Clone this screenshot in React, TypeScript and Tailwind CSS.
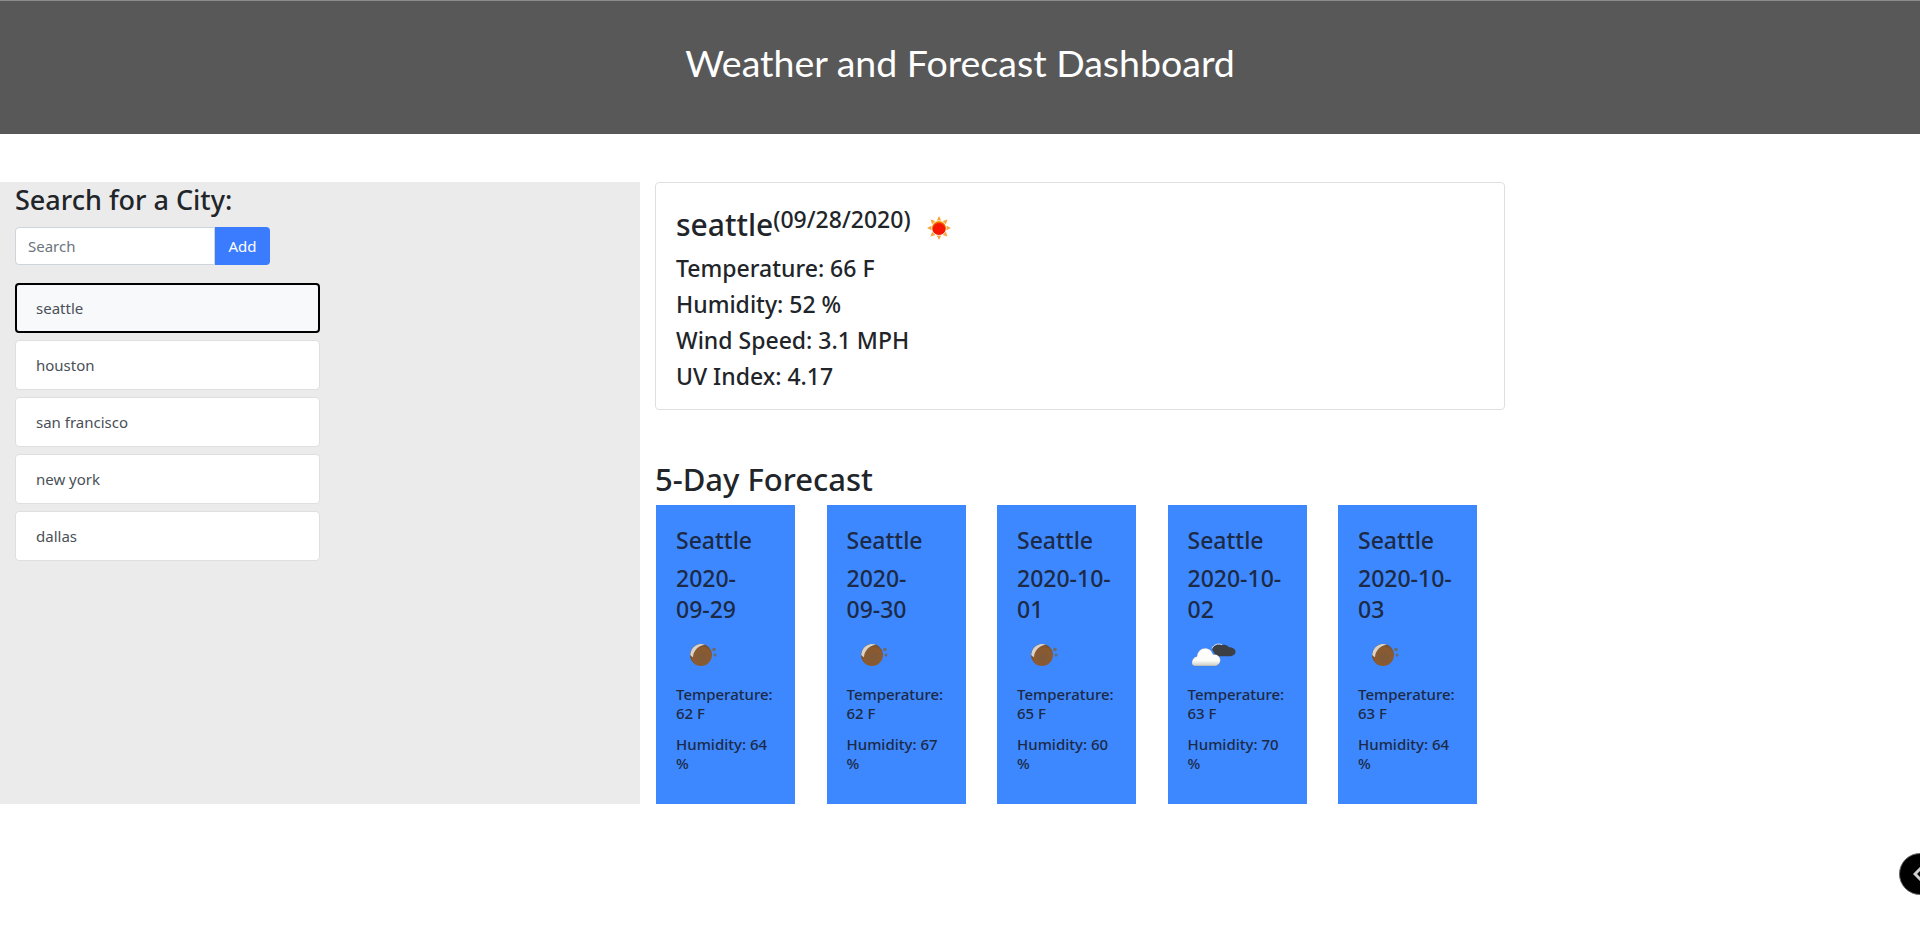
import { useId } from "react";

const cities = ["seattle", "houston", "san francisco", "new york", "dallas"];

type Day = {
	dateTop: string;
	dateBottom: string;
	temp: number;
	humidity: number;
	icon: "night" | "cloud";
};

const forecast: Day[] = [
	{ dateTop: "2020-", dateBottom: "09-29", temp: 62, humidity: 64, icon: "night" },
	{ dateTop: "2020-", dateBottom: "09-30", temp: 62, humidity: 67, icon: "night" },
	{ dateTop: "2020-10-", dateBottom: "01", temp: 65, humidity: 60, icon: "night" },
	{ dateTop: "2020-10-", dateBottom: "02", temp: 63, humidity: 70, icon: "cloud" },
	{ dateTop: "2020-10-", dateBottom: "03", temp: 63, humidity: 64, icon: "night" },
];

function SunIcon() {
	const id = useId();
	return (
		<svg width="26" height="26" viewBox="0 0 26 26" className="ml-[15px] mt-[9px] shrink-0">
			<defs>
				<radialGradient id={id} cx="50%" cy="60%" r="55%">
					<stop offset="0%" stopColor="#ff1200" />
					<stop offset="75%" stopColor="#f01a00" />
					<stop offset="100%" stopColor="#ff9a00" />
				</radialGradient>
			</defs>
			<g fill="#f7a63c">
				<path d="M13 1l2.200 4.500h-4.400z" />
				<path d="M13 25l2.200-4.500h-4.400z" />
				<path d="M1 13l4.500-2.200v4.400z" />
				<path d="M25 13l-4.500-2.200v4.400z" />
				<path d="M4.500 4.500l4.800 1.600-3.200 3.200z" />
				<path d="M21.500 4.500l-4.800 1.600 3.200 3.200z" />
				<path d="M4.500 21.500l4.800-1.600-3.200-3.200z" />
				<path d="M21.500 21.500l-4.800-1.600 3.200-3.200z" />
			</g>
			<circle cx="13" cy="13" r="7" fill={`url(#${id})`} />
		</svg>
	);
}

function NightIcon() {
	const id = useId();
	return (
		<svg width="50" height="50" viewBox="0 0 50 50" className="mt-[1px]">
			<defs>
				<radialGradient id={id} cx="55%" cy="60%" r="60%">
					<stop offset="0%" stopColor="#7d5a3c" />
					<stop offset="70%" stopColor="#8c5a2e" />
					<stop offset="100%" stopColor="#6f4a2a" />
				</radialGradient>
			</defs>
			<circle cx="25" cy="25" r="11" fill={`url(#${id})`} />
			<path d="M14.200 25a11 11 0 0 1 14.800-10.300 13 13 0 0 0-12 12.600 11 11 0 0 1-2.800-2.300z" fill="#d8d4cc" />
			<circle cx="38" cy="19.500" r="1.800" fill="#6b6a6a" />
			<circle cx="39" cy="25" r="1.500" fill="#6b6a6a" />
		</svg>
	);
}

function CloudIcon() {
	const id = useId();
	return (
		<svg width="50" height="50" viewBox="0 0 50 50" className="mt-[2px]">
			<defs>
				<linearGradient id={id} x1="0" y1="0" x2="0" y2="1">
					<stop offset="0%" stopColor="#ffffff" />
					<stop offset="70%" stopColor="#fbfbf8" />
					<stop offset="100%" stopColor="#c9c9c4" />
				</linearGradient>
			</defs>
			<path
				d="M24 19c1.500-4.500 7-6 10.500-4 2.500-.8 5 0 6.500 2.300 3.500 0 6.500 1.700 6.500 4.500s-2.800 4.500-6.500 4.500H28z"
				fill="#3c3f43"
			/>
			<path d="M24 18.500c1.500-4 6.500-5.500 10-3.700" fill="none" stroke="#e8e8e8" strokeWidth="0.9" />
			<path
				d="M4 34c-.5-4 2-7 5-7.500.5-5.500 5-9 10-8 3 .6 5 3 6 6 3.500-.6 6.500 1.200 7.300 4.800.5 3-1.200 5.500-4.300 6.700H8C6 36 4.500 35.500 4 34z"
				fill={`url(#${id})`}
				stroke="#5b5b5b"
				strokeOpacity="0.35"
				strokeWidth="0.6"
			/>
		</svg>
	);
}

function ForecastCard({ day }: { day: Day }) {
	return (
		<div className="w-[139px] h-[299px] bg-[#3d88ff] px-5 pt-[20px] text-[#1c2a45]">
			<p className="text-[23px] leading-[30px] font-medium">Seattle</p>
			<p className="mt-[8px] text-[23px] leading-[31px] font-medium whitespace-nowrap">
				{day.dateTop}
				<br />
				{day.dateBottom}
			</p>
			<div className="mt-[5px] h-[50px]">
				{day.icon === "night" ? <NightIcon /> : <CloudIcon />}
			</div>
			<p className="mt-[5px] text-[15px] leading-[19px] font-medium">
				Temperature: {day.temp} F
			</p>
			<p className="mt-[12px] text-[15px] leading-[19px] font-medium">
				Humidity: {day.humidity} %
			</p>
		</div>
	);
}

export default function App() {
	return (
		<div className="relative min-h-[938px] bg-white text-[#212529] font-['Noto_Sans',sans-serif] overflow-hidden">
			<header className="h-[134px] bg-[#585858] border-t border-[#8c8c8c] pb-[9px] flex items-center justify-center">
				<h1 className="text-white text-[37.500px] font-['Lato',sans-serif] font-normal">
					Weather and Forecast Dashboard
				</h1>
			</header>

			<main className="mt-[48px] flex">
				<aside className="w-[640px] h-[622px] bg-[#ebebeb] pl-[15px]">
					<h2 className="text-[27px] leading-[36px] font-medium">Search for a City:</h2>
					<div className="mt-[9px] flex">
						<input
							placeholder="Search"
							className="w-[200px] h-[38px] bg-white border border-[#ced4da] rounded-l px-3 text-[15px] text-[#495057] placeholder:text-[#6c757d]"
						/>
						<button
							type="button"
							className="w-[55px] h-[38px] bg-[#3a7cfd] text-white text-[15px] rounded-r"
						>
							Add
						</button>
					</div>
					<ul className="mt-[18px] w-[305px] flex flex-col gap-[7px]">
						{cities.map((city, i) => (
							<li
								key={city}
								className={
									i === 0
										? "h-[50px] flex items-center px-[19px] text-[15px] text-[#495057] bg-[#f8f9fa] border-2 border-black rounded"
										: "h-[50px] flex items-center px-[20px] text-[15px] text-[#495057] bg-white border border-[#dfdfdf] rounded-sm"
								}
							>
								{city}
							</li>
						))}
					</ul>
				</aside>

				<section className="ml-[15px] w-[850px]">
					<div className="h-[228px] border border-[#dfdfdf] rounded pl-[20px] pt-[23px]">
						<div className="flex items-start">
							<span className="text-[30px] leading-[38px] font-medium">seattle</span>
							<span className="text-[23px] leading-[26px] font-medium">(09/28/2020)</span>
							<SunIcon />
						</div>
						<div className="mt-[6px] text-[23px] leading-[36px] font-medium">
							<p>Temperature: 66 F</p>
							<p>Humidity: 52 %</p>
							<p>Wind Speed: 3.1 MPH</p>
							<p>UV Index: 4.17</p>
						</div>
					</div>
					<h2 className="mt-[45px] mb-[2px] text-[31px] leading-[48px] font-medium">5-Day Forecast</h2>
					<div className="flex gap-[31.500px] ml-[1px]">
						{forecast.map((day) => (
							<ForecastCard key={day.dateTop + day.dateBottom} day={day} />
						))}
					</div>
				</section>
			</main>

			<div className="absolute left-[1899px] top-[853px] w-[42px] h-[42px] rounded-full bg-black border border-[#666] flex items-center pl-[13px]">
				<svg width="10" height="16" viewBox="0 0 10 16">
					<path d="M8 2L2 8l6 6" fill="none" stroke="#cfcfcf" strokeWidth="3" />
				</svg>
			</div>
		</div>
	);
}
